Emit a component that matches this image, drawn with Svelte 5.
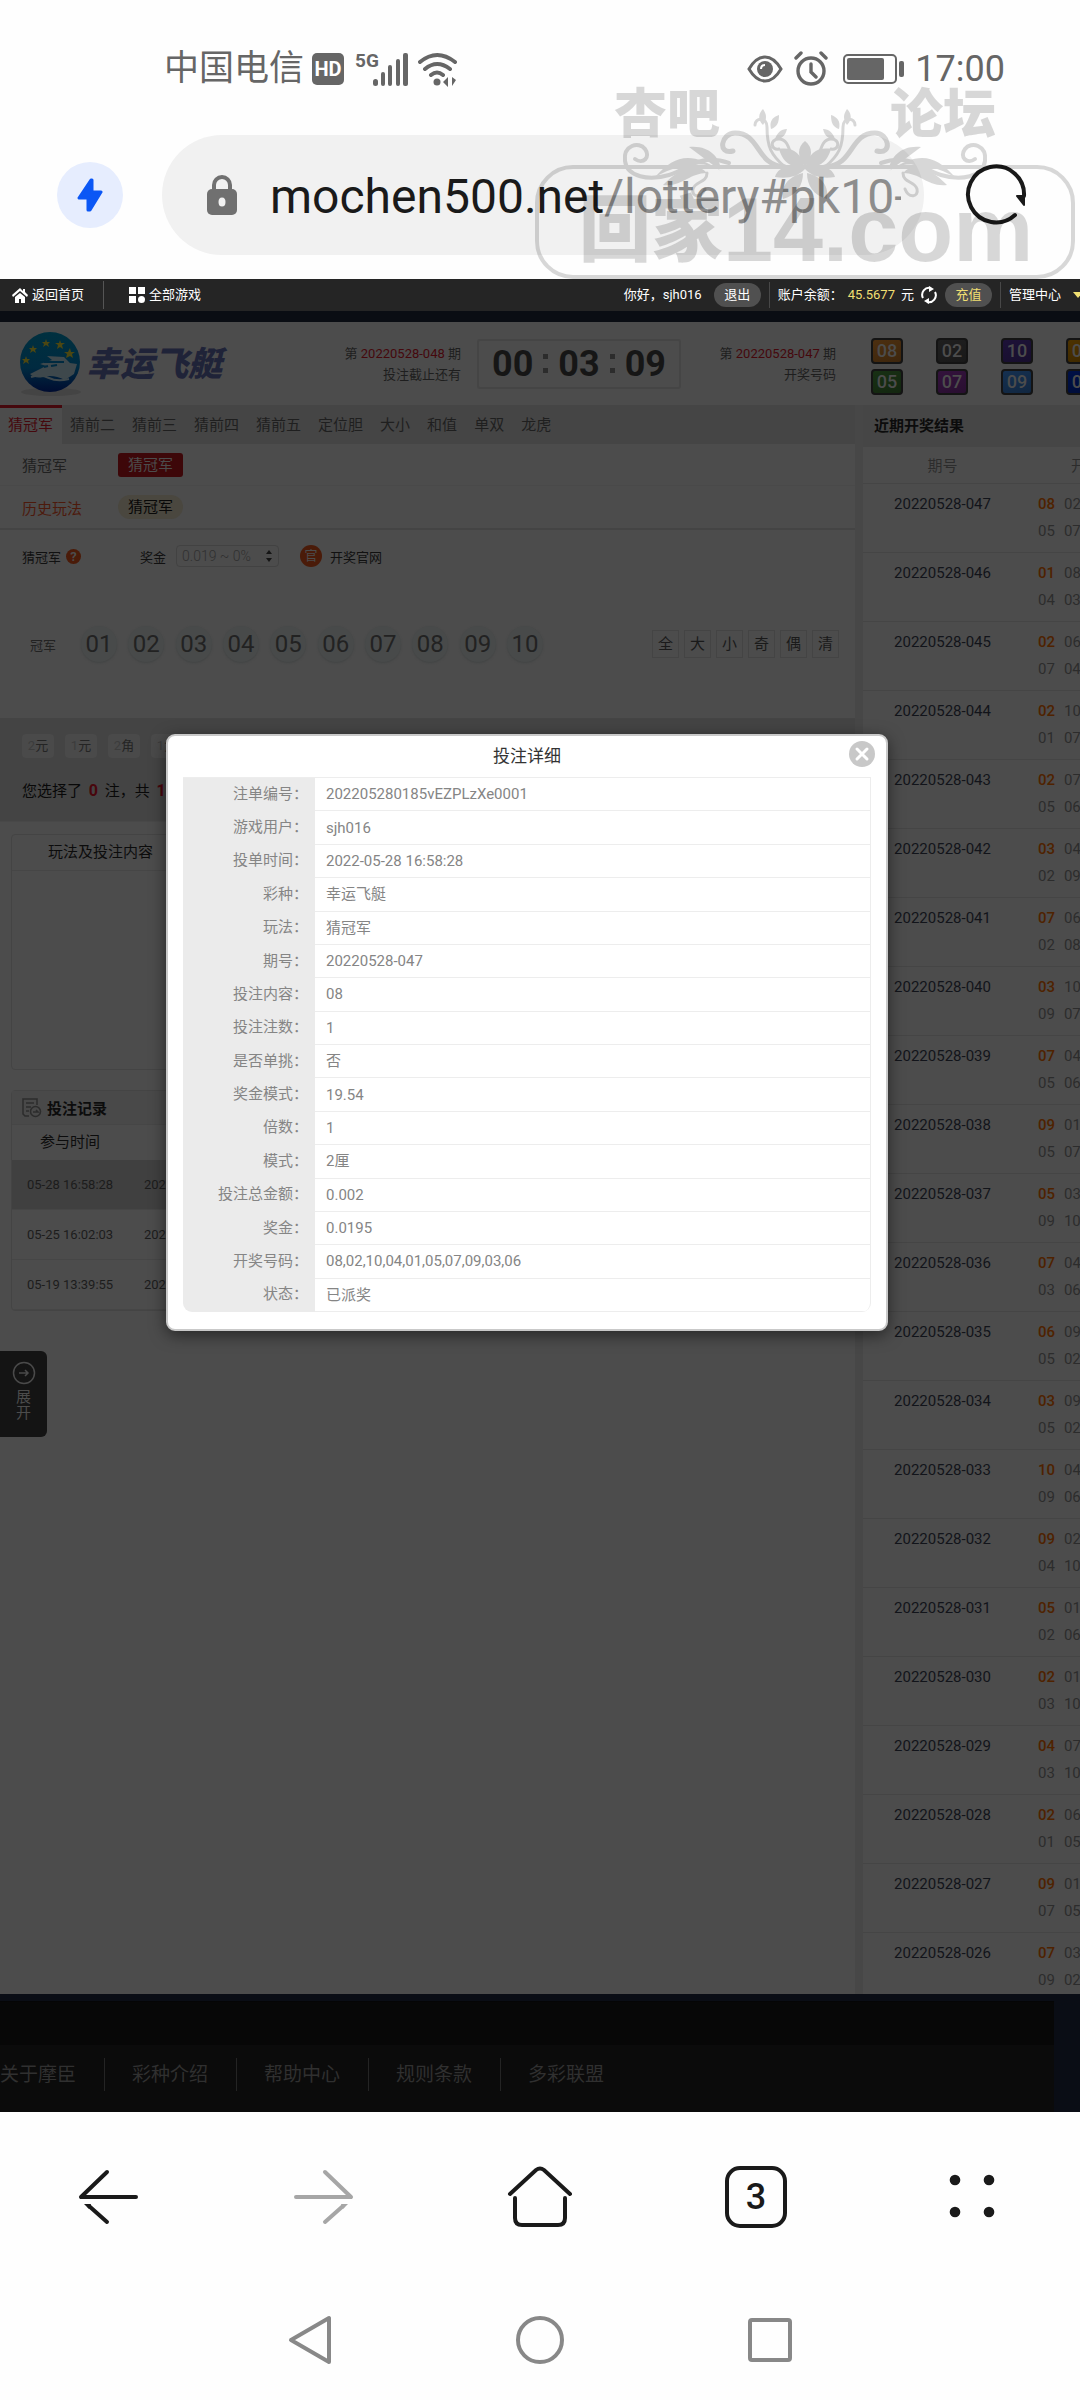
<script lang="ts">
	interface Draw {
		id: string;
		rows: string[][];
	}

	const playTabs = ['猜冠军', '猜前二', '猜前三', '猜前四', '猜前五', '定位胆', '大小', '和值', '单双', '龙虎'];
	const numbers = ['01', '02', '03', '04', '05', '06', '07', '08', '09', '10'];
	const quickPicks = ['全', '大', '小', '奇', '偶', '清'];
	const units = ['2元', '1元', '2角', '1角'];
	const footerLinks = ['关于摩臣', '彩种介绍', '帮助中心', '规则条款', '多彩联盟'];

	const latest = [
		{ n: '08', c: '#4c2f10' },
		{ n: '02', c: '#1f1f1f' },
		{ n: '10', c: '#1d1238' },
		{ n: '04', c: '#4c3200' },
		{ n: '05', c: '#183014' },
		{ n: '07', c: '#33123c' },
		{ n: '09', c: '#153050' },
		{ n: '03', c: '#001046' }
	];

	// first pair of each draw, then the pair wrapped under it
	const pairs = [
		'08020507', '01080403', '02060704', '02100107', '02070506', '03040209',
		'07060208', '03100907', '07040506', '09010507', '05030910', '07040306',
		'06090502', '03090502', '10040906', '09020410', '05010206', '02010310',
		'04070310', '02060105', '09010705', '07030902'
	];
	const draws: Draw[] = pairs.map((p, i) => ({
		id: `20220528-0${47 - i}`,
		rows: [
			[p.slice(0, 2), p.slice(2, 4)],
			[p.slice(4, 6), p.slice(6, 8)]
		]
	}));

	const records = ['05-28 16:58:28', '05-25 16:02:03', '05-19 13:39:55'];

	const details = [
		['注单编号', '202205280185vEZPLzXe0001'],
		['游戏用户', 'sjh016'],
		['投单时间', '2022-05-28 16:58:28'],
		['彩种', '幸运飞艇'],
		['玩法', '猜冠军'],
		['期号', '20220528-047'],
		['投注内容', '08'],
		['投注注数', '1'],
		['是否单挑', '否'],
		['奖金模式', '19.54'],
		['倍数', '1'],
		['模式', '2厘'],
		['投注总金额', '0.002'],
		['奖金', '0.0195'],
		['开奖号码', '08,02,10,04,01,05,07,09,03,06'],
		['状态', '已派奖']
	];

	let activeTab = $state('猜冠军');
	let showDetail = $state(true);
</script>

<div class="phone" lang="zh-CN">
	<div class="status">
		<div class="status-side">
			<span class="carrier">中国电信</span>
			<span class="hd">HD</span>
			<svg class="signal" width="56" height="36" viewBox="0 0 56 36" fill="#666">
				<text x="1" y="16" font-size="19" font-weight="700" font-family="Roboto">5G</text>
				<rect x="19" y="28" width="5" height="7" rx="2.5" />
				<rect x="27" y="21" width="4" height="14" rx="2" />
				<rect x="34" y="14" width="4" height="21" rx="2" />
				<rect x="42" y="8" width="4" height="27" rx="2" />
				<rect x="49" y="2" width="5" height="33" rx="2" />
			</svg>
			<svg class="wifi" width="40" height="36" viewBox="0 0 40 36" fill="none" stroke="#666" stroke-width="4" stroke-linecap="round">
				<path d="M2 11q17-14 35 0M7 18q12-10 25 0M13 24q6-5 12 0" />
				<circle cx="19" cy="31" r="3.5" fill="#666" stroke="none" />
				<path d="M25 31l5-5v10zM38 29l-4 6v-9z" fill="#666" stroke="none" />
			</svg>
		</div>
		<div class="status-side">
			<svg width="36" height="36" viewBox="0 0 36 36" fill="none" stroke="#666" stroke-width="3">
				<path d="M2 18Q9 6 18 6t16 12q-7 12-16 12T2 18z" />
				<circle cx="18" cy="18" r="8" fill="#666" stroke="none" />
				<path d="M14 18q0-4 4-4" stroke="#fff" stroke-width="2" />
			</svg>
			<svg class="alarm" width="34" height="36" viewBox="0 0 34 36" fill="none" stroke="#666" stroke-width="3.4" stroke-linecap="round">
				<circle cx="17" cy="20" r="13" />
				<path d="M17 13v8l5 5M2 7l5-5M32 7l-5-5" />
			</svg>
			<svg class="battery" width="62" height="32" viewBox="0 0 62 32">
				<rect x="1" y="2" width="52" height="28" rx="4" fill="none" stroke="#666" stroke-width="2" />
				<rect x="4" y="5" width="37" height="22" rx="2" fill="#666" />
				<rect x="56" y="8" width="5" height="16" rx="2" fill="#666" />
			</svg>
			<span class="clock">17:00</span>
		</div>
	</div>

	<div class="address">
		<button class="boost" aria-label="加速">
			<svg width="26" height="36" viewBox="0 0 26 36" fill="#0b57f5" stroke="#0b57f5" stroke-width="3" stroke-linejoin="round">
				<path d="M14 3L2 21h9v12h2L24 15h-9V3z" />
			</svg>
		</button>
		<button class="url">
			<svg width="30" height="40" viewBox="0 0 30 40">
				<path d="M7 16V10a8 8 0 0 1 16 0v6" fill="none" stroke="#707070" stroke-width="4" />
				<rect y="14" width="30" height="26" rx="5" fill="#707070" />
				<ellipse cx="15" cy="27" rx="3.5" ry="4.5" fill="#f1f1f1" />
			</svg>
			<span class="url-text">mochen500.net<i>/lottery#pk10-</i></span>
		</button>
		<button class="reload" aria-label="刷新">
			<svg width="64" height="64" viewBox="0 0 64 64" fill="none" stroke="#1a1a1a" stroke-width="4" stroke-linecap="round">
				<path d="M51 52A28 28 0 1 1 60 33" />
				<path d="M53 33h7v9z" fill="#1a1a1a" stroke-width="2" stroke-linejoin="round" />
			</svg>
		</button>
	</div>

	<!-- forum stamp laid over the address bar -->
	<div class="stamp" aria-hidden="true">
		<div class="stamp-top"><span>杏吧</span><span>论坛</span></div>
		<svg width="372" height="92" viewBox="0 0 372 92" fill="none" stroke="#000" stroke-width="4" stroke-linecap="round">
			<g id="flourish">
				<path d="M16 44c8 6 16-2 10-10S4 30 6 46s24 20 44 14 30-22 60-12" />
				<path d="M44 70c20 2 26-12 44-12-12-14-30-2-44 12zM36 62c20-22 36-26 66-6L70 32c20-2 30 10 32 22-20-8-40-6-66 8z" fill="#000" stroke="none" />
				<path d="M86 74c-4 10-14 8-12 0s14-6 14-16" stroke-width="3" />
				<path d="M114 36c-16 4-12-18 2-18 26 0 20 32 50 34" stroke-width="5" />
				<path d="M136 10c0-8 12-8 12 2 0 20 4 28 18 40M160 34c-8 2-10-10 0-10 12 0 10 20 18 26" stroke-width="3" />
				<path d="M144 10c-6-6-4-12 0-16 4 6 4 10 0 16zM152 14c-2-8 2-12 8-14 0 8-2 12-8 14zM156 24c2-6 6-10 12-10-2 8-6 10-12 10z" fill="#000" stroke="none" />
				<path d="M186 54c-4-18-14-22-26-20 4 14 12 18 26 20zM186 54c-18-6-28 0-30 8 12 2 22 0 30-8zM184 58c-16 4-22 14-20 26 14-4 20-14 20-26z" fill="#000" stroke="none" />
			</g>
			<path d="M186 52c-8-10-8-20 0-26 8 6 8 16 0 26z" fill="#000" stroke="none" />
			<use href="#flourish" transform="translate(372 0) scale(-1 1)" />
		</svg>
		<div class="stamp-frame"><span>回家</span><b>14.com</b></div>
	</div>

	<div class="game">
		<nav class="topbar">
			<a href="#home" class="home">
				<svg width="16" height="15" viewBox="0 0 16 15" fill="#fff">
					<path d="M8 0L0 7l1 2 7-6 7 6 1-2-3-3V1h-2v2zM3 9l5-4 5 4v6H9v-4H7v4H3z" />
				</svg>
				返回首页
			</a>
			<a href="#games" class="all-games">
				<svg width="16" height="16" viewBox="0 0 16 16" fill="#fff">
					<path d="M0 0h7v7H0zM9 0h7v7H9zM0 9h7v7H0z" /><circle cx="12.5" cy="12.5" r="3.5" />
				</svg>
				全部游戏
			</a>
			<div class="account">
				<span class="hello">你好，sjh016</span>
				<button class="pill">退出</button>
				<span class="sep"></span>
				<span>账户余额：</span>
				<span class="gold money">45.5677</span>
				<span>元</span>
				<svg width="18" height="18" viewBox="0 0 18 18" fill="none" stroke="#fff" stroke-width="2">
					<path d="M3 12A7 7 0 0 1 11 2M15 6a7 7 0 0 1-8 10" />
					<path d="M9 0l5 3-5 3zM9 12l-5 3 5 3z" fill="#fff" stroke="none" />
				</svg>
				<button class="pill gold">充值</button>
				<span class="sep"></span>
				<a href="#manage" class="manage">管理中心</a>
				<svg class="caret" width="10" height="6" viewBox="0 0 10 6"><path d="M0 0h10L5 6z" fill="#f0df72" /></svg>
			</div>
		</nav>

		<header class="head">
			<svg width="68" height="66" viewBox="0 0 68 66">
				<defs>
					<linearGradient id="sea" x1="0" y1="0" x2="0" y2="1">
						<stop offset="0" stop-color="#00303f" />
						<stop offset=".6" stop-color="#002a40" />
						<stop offset="1" stop-color="#000c30" />
					</linearGradient>
				</defs>
				<ellipse cx="34" cy="61" rx="30" ry="4" fill="#444" />
				<circle cx="33" cy="31" r="30" fill="url(#sea)" />
				<path d="M13 43q12-6 16-8l-6-2 12-4-5-4 17 1 6 6 7 1-3 10-9 6q-12-6-22-3-8 2-13-3z" fill="#3e484c" />
				<path d="M27 31h20M27 36l4-1m3 0l6-1" stroke="#002a40" stroke-width="2" />
				<path d="M14 46q10-3 18 1t20 1" fill="none" stroke="#3e484c" stroke-width="2" />
				<g fill="#4c4712">
					<path d="M9 25l1 3h3l-2 2 1 3-3-2-3 2 1-3-2-2h3z" />
					<path d="M16 14l1 3h3l-2 2 1 3-3-2-3 2 1-3-2-2h3z" />
					<path d="M29 8l1 3h3l-2 2 1 3-3-2-3 2 1-3-2-2h3z" />
					<path d="M43 9l1 3h4l-3 2 1 4-3-2-3 2 1-4-3-2h4z" />
					<path d="M53 17l1 4h4l-3 2 1 4-3-2-4 2 1-4-3-2h4z" />
				</g>
			</svg>
			<h1>幸运飞艇</h1>
			<p class="issue">第 <em>20220528-048</em> 期<br />投注截止还有</p>
			<div class="countdown"><b>00</b><i></i><b>03</b><i></i><b>09</b></div>
			<p class="issue last">第 <em>20220528-047</em> 期<br />开奖号码</p>
			<div class="balls">
				{#each latest as ball}
					<span style:background-color={ball.c}>{ball.n}</span>
				{/each}
			</div>
		</header>

		<div class="columns">
			<main>
				<div class="tabs">
					{#each playTabs as tab}
						<button class:active={tab === activeTab} onclick={() => (activeTab = tab)}>{tab}</button>
					{/each}
				</div>
				<div class="play-row">
					<span>猜冠军</span><button class="play">猜冠军</button>
				</div>
				<div class="play-row history">
					<span>历史玩法</span><button class="play">猜冠军</button>
				</div>

				<div class="options">
					<span>猜冠军</span>
					<span class="help">?</span>
					<label for="prize">奖金</label>
					<div class="select">
						<select id="prize"><option>0.019 ~ 0%</option></select>
						<svg width="6" height="12" viewBox="0 0 6 12" fill="#151515"><path d="M3 0l3 4H0zM0 8h6l-3 4z" /></svg>
					</div>
					<span class="official">官</span>
					<a href="#official">开奖官网</a>
				</div>

				<div class="pick">
					<span class="pick-name">冠军</span>
					<div class="circles">
						{#each numbers as n}<button>{n}</button>{/each}
					</div>
					<div class="quick">
						{#each quickPicks as q}<button>{q}</button>{/each}
					</div>
				</div>

				<div class="stake">
					<div class="units">
						{#each units as u}<button><i>{u[0]}</i>{u[1]}</button>{/each}
					</div>
					<p>您选择了 <b>0</b> 注，共 <b>1</b></p>
				</div>

				<div class="slip">
					<h2>玩法及投注内容</h2>
				</div>

				<div class="records">
					<h2>
						<svg width="20" height="20" viewBox="0 0 20 20" fill="none" stroke="#2c2c2c" stroke-width="1.5">
							<path d="M7 18H3l-2-2V1h14v6M4 5h8M4 9h5M4 13h3" /><circle cx="13.5" cy="13.5" r="5" /><path d="M11 14h5l-2-2" />
						</svg>
						投注记录
					</h2>
					<table>
						<thead>
							<tr><th>参与时间</th><th></th></tr>
						</thead>
						<tbody>
							{#each records as r}
								<tr><td>{r}</td><td>20220528</td></tr>
							{/each}
						</tbody>
					</table>
				</div>

				<button class="expand">
					<svg width="24" height="24" viewBox="0 0 24 24" fill="none" stroke="#4a4a4a" stroke-width="1.5">
						<circle cx="12" cy="12" r="10.5" /><path d="M7 12h9M13 9l3 3-3 3" />
					</svg>
					<span>展<br />开</span>
				</button>
			</main>

			<aside>
				<h2>近期开奖结果</h2>
				<table>
					<thead>
						<tr><th>期号</th><th class="code-head">开奖号</th></tr>
					</thead>
					<tbody>
						{#each draws as draw}
							<tr>
								<td>{draw.id}</td>
								<td class="codes">
									{#each draw.rows as row, i}
										<div>
											{#each row as n, j}<span class:hot={i === 0 && j === 0}>{n}</span>{/each}
										</div>
									{/each}
								</td>
							</tr>
						{/each}
					</tbody>
				</table>
			</aside>
		</div>

		<footer>
			<div class="links">
				{#each footerLinks as link}<a href="#about">{link}</a>{/each}
			</div>
		</footer>

		{#if showDetail}
			<div class="modal" role="dialog" aria-labelledby="modal-title">
				<h2 id="modal-title">投注详细</h2>
				<button class="close" aria-label="关闭" onclick={() => (showDetail = false)}>
					<svg width="26" height="26" viewBox="0 0 26 26">
						<circle cx="13" cy="13" r="13" fill="#c8c8c8" />
						<path d="M8 8l10 10M18 8L8 18" stroke="#fff" stroke-width="3" stroke-linecap="round" />
					</svg>
				</button>
				<table>
					<tbody>
						{#each details as [name, value]}
							<tr><th scope="row">{name}：</th><td>{value}</td></tr>
						{/each}
					</tbody>
				</table>
			</div>
		{/if}
	</div>

	<nav class="browser-nav">
		<button aria-label="后退">
			<svg width="64" height="64" viewBox="0 0 64 64" fill="none" stroke="#1a1a1a" stroke-width="4" stroke-linecap="round">
				<path d="M31 7L5 32h55" stroke-linejoin="round" /><path d="M31 57L13 41" /><path d="M8 39h7l-2 5z" fill="#1a1a1a" stroke="none" />
			</svg>
		</button>
		<button aria-label="前进">
			<svg width="64" height="64" viewBox="0 0 64 64" fill="none" stroke="#a6a6a6" stroke-width="4" stroke-linecap="round">
				<path d="M33 7l26 25H4" stroke-linejoin="round" /><path d="M33 57l18-16" /><path d="M56 39h-7l2 5z" fill="#a6a6a6" stroke="none" />
			</svg>
		</button>
		<button aria-label="主页">
			<svg width="68" height="64" viewBox="0 0 68 64" fill="none" stroke="#1a1a1a" stroke-width="4" stroke-linecap="round">
				<path d="M4 29L30 5q4-3 8 0l26 24" /><path d="M9 33v20q0 7 7 7h36q7 0 7-7V33" />
			</svg>
		</button>
		<button aria-label="标签页"><span class="tab-count">3</span></button>
		<button aria-label="菜单">
			<svg width="46" height="46" viewBox="0 0 46 46" fill="#1a1a1a">
				<circle cx="6" cy="6" r="5.3" /><circle cx="40" cy="6" r="5.3" /><circle cx="6" cy="38" r="5.3" /><circle cx="40" cy="38" r="5.3" />
			</svg>
		</button>
	</nav>
	<nav class="system-nav">
		<button aria-label="返回">
			<svg width="44" height="50" viewBox="0 0 44 50" fill="none" stroke="#888" stroke-width="4" stroke-linejoin="round">
				<path d="M41 3v44L3 25z" />
			</svg>
		</button>
		<button aria-label="桌面">
			<svg width="50" height="50" viewBox="0 0 50 50" fill="none" stroke="#888" stroke-width="4"><circle cx="25" cy="25" r="22" /></svg>
		</button>
		<button aria-label="最近任务">
			<svg width="44" height="44" viewBox="0 0 44 44" fill="none" stroke="#888" stroke-width="4"><rect x="2" y="2" width="40" height="40" rx="2" /></svg>
		</button>
	</nav>
</div>

<style>
	:global(body) {
		background: #fefefe;
	}
	.phone {
		position: relative;
		overflow: hidden;
		font-family: Roboto, 'Noto Sans CJK SC', sans-serif;
		font-size: 15px;
	}
	button {
		padding: 0;
		border: 0;
		background: none;
		color: inherit;
		font: inherit;
		cursor: pointer;
	}
	a {
		color: inherit;
		text-decoration: none;
	}
	h1,
	h2,
	p {
		margin: 0;
	}
	i,
	em {
		font-style: normal;
	}
	svg {
		display: block;
		flex: none;
	}
	table {
		border-collapse: separate;
		border-spacing: 0;
	}
	th,
	td {
		padding: 0;
		font-weight: 400;
	}

	/* status bar */
	.status {
		display: flex;
		justify-content: space-between;
		padding: 49px 75px 46px 164px;
		color: #666;
	}
	.status-side {
		display: flex;
		align-items: center;
		height: 40px;
	}
	.carrier {
		font-size: 35px;
		line-height: 40px;
	}
	.hd {
		width: 32px;
		margin-left: 8px;
		border-radius: 5px;
		background: #666;
		color: #fff;
		font-size: 20px;
		font-weight: 700;
		line-height: 32px;
		text-align: center;
	}
	.signal {
		margin-left: 10px;
	}
	.wifi {
		margin-left: 8px;
	}
	.alarm {
		margin-left: 11px;
	}
	.battery {
		margin-left: 15px;
	}
	.clock {
		margin-left: 10px;
		font-size: 36px;
		line-height: 40px;
	}

	/* address bar */
	.address {
		display: flex;
		align-items: center;
		padding: 0 52px 24px 57px;
	}
	.boost {
		display: grid;
		place-items: center;
		width: 66px;
		height: 66px;
		border-radius: 50%;
		background: #e6edfe;
	}
	.url {
		display: flex;
		flex: 1;
		align-items: center;
		min-width: 0;
		height: 120px;
		margin: 0 40px 0 39px;
		padding: 0 23px 0 45px;
		border-radius: 60px;
		background: #f1f1f1;
	}
	.url-text {
		overflow: hidden;
		margin-left: 33px;
		padding-top: 4px;
		color: #1a1a1a;
		font-size: 48px;
		line-height: 60px;
		white-space: nowrap;
	}
	.url-text i {
		color: #8d8d8d;
	}

	/* stamp */
	.stamp {
		position: absolute;
		top: 85px;
		right: 5px;
		width: 540px;
		opacity: 0.15;
		color: #000;
		font-family: 'Liberation Sans', 'Noto Sans CJK SC', sans-serif;
		font-weight: 900;
		pointer-events: none;
	}
	.stamp-top {
		display: flex;
		justify-content: space-between;
		padding: 0 79px;
		font-size: 53px;
		line-height: 60px;
	}
	.stamp svg {
		position: absolute;
		top: 30px;
		left: 84px;
		overflow: visible;
	}
	.stamp-frame {
		display: flex;
		align-items: center;
		box-sizing: border-box;
		height: 114px;
		margin-top: 20px;
		padding: 16px 0 0 40px;
		border: 4px solid #000;
		border-radius: 38px;
		font-size: 72px;
		line-height: 98px;
		white-space: nowrap;
	}
	.stamp-frame b {
		font-size: 90px;
	}

	/* game page, dimmed behind the dialog */
	.game {
		position: relative;
		overflow: hidden;
		background: #4c4c4c;
	}
	.topbar {
		display: flex;
		align-items: center;
		height: 32px;
		border-bottom: 11px solid #0a0d13;
		background: #252525;
		color: #fff;
		font-size: 13px;
		line-height: 20px;
		white-space: nowrap;
	}
	.topbar a {
		display: flex;
		align-items: center;
		gap: 4px;
	}
	.topbar .home {
		height: 28px;
		padding: 0 19px 0 12px;
		border-right: 1px solid #555;
	}
	.all-games {
		padding-left: 25px;
	}
	.account {
		display: flex;
		align-items: center;
		height: 32px;
		margin-left: auto;
	}
	.pill {
		width: 47px;
		height: 24px;
		margin: 0 8px 0 7px;
		border-radius: 12px;
		background: #505050;
		line-height: 24px;
	}
	.hello {
		margin-right: 5px;
	}
	.gold {
		color: #f0df72;
	}
	.money {
		margin: 0 6px 0 5px;
	}
	.account svg {
		margin-left: 6px;
	}
	.sep {
		width: 1px;
		height: 26px;
		margin-right: 8px;
		background: #484848;
	}
	.account .caret {
		margin: 0 -3px 0 12px;
	}

	.head {
		display: flex;
		align-items: center;
		height: 83px;
	}
	.head svg {
		margin-left: 17px;
	}
	.head h1 {
		margin-left: 1px;
		color: #1f2338;
		font-size: 34px;
		font-style: italic;
		font-weight: 900;
		line-height: 40px;
		white-space: nowrap;
	}
	.issue {
		width: 239px;
		color: #1e1e1e;
		font-size: 13px;
		line-height: 21px;
		text-align: right;
		white-space: nowrap;
	}
	.issue em {
		color: #45080d;
	}
	.issue.last {
		width: 155px;
	}
	.countdown {
		display: flex;
		flex: none;
		align-items: center;
		justify-content: center;
		gap: 10px;
		width: 200px;
		height: 46px;
		margin-left: 16px;
		border: 2px solid #454545;
		border-radius: 3px;
		color: #161616;
		font-size: 36px;
		line-height: 46px;
	}
	.countdown i {
		width: 5px;
		height: 9px;
		border-top: 5px solid #2c2c2c;
		border-bottom: 5px solid #2c2c2c;
	}
	.balls {
		display: grid;
		flex: none;
		grid-template-columns: repeat(4, 32px);
		gap: 5px 33px;
		margin: 6px -18px 0 auto;
	}
	.balls span {
		box-sizing: border-box;
		height: 26px;
		border: 2px solid #141414;
		border-radius: 4px;
		background-image: linear-gradient(160deg, transparent, rgba(0, 0, 0, 0.2));
		color: #4c4c4c;
		font-size: 18px;
		font-weight: 500;
		line-height: 22px;
		text-align: center;
	}

	.columns {
		display: flex;
		background: #4c4c4c;
	}
	main {
		flex: 1;
		min-width: 0;
	}
	.tabs {
		display: flex;
		height: 39px;
		background: #454545;
		color: #1f1f1f;
	}
	.tabs button {
		padding: 3px 9px 0 8px;
		border-bottom: 3px solid transparent;
		line-height: 34px;
		white-space: nowrap;
	}
	.tabs .active {
		padding-top: 0;
		border-top: 3px solid #45080d;
		border-bottom-color: #4c4c4c;
		background: #4c4c4c;
		color: #45080d;
	}
	.play-row {
		display: flex;
		align-items: center;
		height: 41px;
		padding-left: 22px;
		border-bottom: 1px solid #494949;
		color: #202020;
	}
	.play-row span {
		width: 96px;
	}
	.play {
		width: 65px;
		height: 24px;
		border-radius: 3px;
		background: #3d0709;
		color: #4c4c4c;
		line-height: 24px;
	}
	.history {
		height: 42px;
		border-bottom: 2px solid #444;
		color: #4c1a0c;
	}
	.history .play {
		border-radius: 12px;
		background: #4a473f;
		color: #080808;
	}
	.options {
		display: flex;
		align-items: center;
		height: 52px;
		padding-left: 22px;
		color: #111;
		font-size: 13px;
	}
	.help {
		width: 15px;
		margin: 0 59px 0 5px;
		border-radius: 50%;
		background: #4a1b09;
		color: #4c4c4c;
		font-weight: 700;
		line-height: 15px;
		text-align: center;
	}
	.select {
		display: flex;
		align-items: center;
		box-sizing: border-box;
		width: 103px;
		height: 22px;
		margin: 0 21px 0 10px;
		padding: 0 6px 0 5px;
		border: 1px solid #424242;
		border-radius: 4px;
	}
	.select select {
		flex: 1;
		min-width: 0;
		padding: 0;
		border: 0;
		background: none;
		color: #303030;
		font: 300 14px/20px Roboto, sans-serif;
		appearance: none;
	}
	.official {
		width: 22px;
		margin-right: 8px;
		border-radius: 50%;
		background: #4a1b09;
		color: #4c4c4c;
		line-height: 22px;
		text-align: center;
	}

	.pick {
		display: flex;
		align-items: center;
		height: 124px;
		padding: 0 16px 12px 30px;
		color: #222;
		font-size: 13px;
	}
	.circles {
		display: flex;
		justify-content: space-between;
		width: 462px;
		margin-left: 25px;
	}
	.circles button {
		width: 36px;
		height: 36px;
		border-radius: 50%;
		background: #484a4a;
		box-shadow: 0 1px 2px #424444;
		font-size: 24px;
		line-height: 36px;
	}
	.quick {
		display: flex;
		gap: 5px;
		margin-left: auto;
	}
	.quick button {
		box-sizing: border-box;
		width: 27px;
		height: 28px;
		border: 1px solid #444;
		color: #1a1a1a;
		font-size: 15px;
		line-height: 24px;
	}

	.stake {
		height: 87px;
		padding: 16px 0 0 22px;
		border-bottom: 1px solid #484848;
		background: #444;
		color: #080808;
	}
	.units {
		display: flex;
		gap: 11px;
	}
	.units button {
		width: 32px;
		height: 24px;
		border-radius: 4px;
		background: #4a4a4a;
		color: #242424;
		font-size: 13px;
		line-height: 24px;
	}
	.units i {
		color: #3c3c3c;
	}
	.stake p {
		margin-top: 21px;
		line-height: 24px;
		white-space: nowrap;
	}
	.stake b {
		margin: 0 3px;
		color: #48060c;
		font-size: 16px;
	}

	.slip,
	.records {
		margin: 12px 0 0 11px;
		border: 1px solid #444;
		border-radius: 4px;
	}
	.slip {
		height: 234px;
	}
	.slip h2 {
		padding-left: 36px;
		border-bottom: 1px solid #464646;
		color: #0c0c0c;
		font-size: 15px;
		font-weight: 400;
		line-height: 35px;
	}
	.records {
		margin-top: 20px;
	}
	.records h2 {
		display: flex;
		align-items: center;
		gap: 5px;
		height: 33px;
		padding-left: 10px;
		border-bottom: 1px solid #464646;
		background: #494949;
		color: #0c0c0c;
		font-size: 15px;
	}
	.records table {
		width: 100%;
		color: #1c1c1c;
		text-align: left;
	}
	.records th {
		height: 31px;
		padding: 0 0 4px 28px;
		color: #0c0c0c;
	}
	.records td {
		height: 49px;
		border-bottom: 1px solid #464646;
		font-size: 13px;
	}
	.records td:first-child {
		width: 117px;
		padding-left: 15px;
	}
	.records tbody tr:first-child td {
		background: #404040;
	}

	.expand {
		display: flex;
		flex-direction: column;
		align-items: center;
		gap: 4px;
		width: 47px;
		height: 86px;
		margin-top: 40px;
		padding-top: 10px;
		border-radius: 0 6px 6px 0;
		background: #141414;
		color: #4c4c4c;
		line-height: 16px;
	}

	aside {
		width: 217px;
		overflow: hidden;
		border-left: 8px solid #474747;
	}
	aside h2 {
		padding-left: 11px;
		background: #464646;
		color: #0c0c0c;
		font-size: 15px;
		line-height: 42px;
	}
	aside table {
		width: 260px;
		table-layout: fixed;
	}
	aside th {
		height: 34px;
		padding-bottom: 2px;
		border-bottom: 1px solid #454545;
		color: #2c2c2c;
	}
	aside th:first-child {
		width: 159px;
	}
	aside .code-head {
		padding-left: 49px;
		text-align: left;
	}
	aside td {
		padding: 7px 0;
		border-bottom: 1px solid #454545;
		color: #12141a;
		line-height: 27px;
		text-align: center;
		vertical-align: top;
	}
	aside tr:last-child td {
		padding-bottom: 0;
		border-bottom: 0;
	}
	aside .codes {
		padding-left: 16px;
		color: #2c2c2c;
	}
	.codes div {
		display: flex;
		gap: 9px;
	}
	.codes .hot {
		color: #4f2200;
		font-weight: 500;
	}

	footer {
		padding: 7px 26px 0 0;
		background: #0a0d15;
	}
	.links {
		display: flex;
		padding: 56px 0 21px;
		border-top: 1px solid #050505;
		background: linear-gradient(#070707 43px, #0b0b0b 43px);
		color: #303030;
		font-size: 19px;
		line-height: 33px;
		white-space: nowrap;
	}
	.links a + a {
		margin-left: 28px;
		padding-left: 27px;
		border-left: 1px solid #242424;
	}

	/* detail dialog */
	.modal {
		position: absolute;
		top: 455px;
		left: 166px;
		right: 192px;
		padding: 0 15px 17px;
		border: 2px solid #c9c9c9;
		border-radius: 9px;
		background: #fff;
		box-shadow: 0 4px 16px rgba(0, 0, 0, 0.5);
	}
	.modal h2 {
		color: #333;
		font-size: 17px;
		font-weight: 400;
		line-height: 41px;
		text-align: center;
	}
	.close {
		position: absolute;
		top: 5px;
		right: 11px;
	}
	.modal table {
		width: 100%;
		height: 535px;
		overflow: hidden;
		border-top: 1px solid #ededed;
		border-right: 1px solid #ededed;
		border-radius: 0 0 9px 9px;
		color: #858585;
		line-height: 20px;
	}
	.modal th {
		width: 125px;
		padding: 0 7px 2px 0;
		background: #ebebeb;
		text-align: right;
	}
	.modal td {
		padding-left: 11px;
		border-bottom: 1px solid #ededed;
	}

	/* bottom bars */
	.browser-nav {
		display: grid;
		grid-template-columns: repeat(5, 1fr);
		height: 170px;
	}
	.browser-nav button,
	.system-nav button {
		display: grid;
		place-items: center;
	}
	.tab-count {
		width: 54px;
		border: 4px solid #1a1a1a;
		border-radius: 15px;
		color: #1a1a1a;
		font-size: 36px;
		font-weight: 500;
		line-height: 54px;
	}
	.system-nav {
		display: flex;
		justify-content: center;
		gap: 183px;
		height: 116px;
	}
</style>
